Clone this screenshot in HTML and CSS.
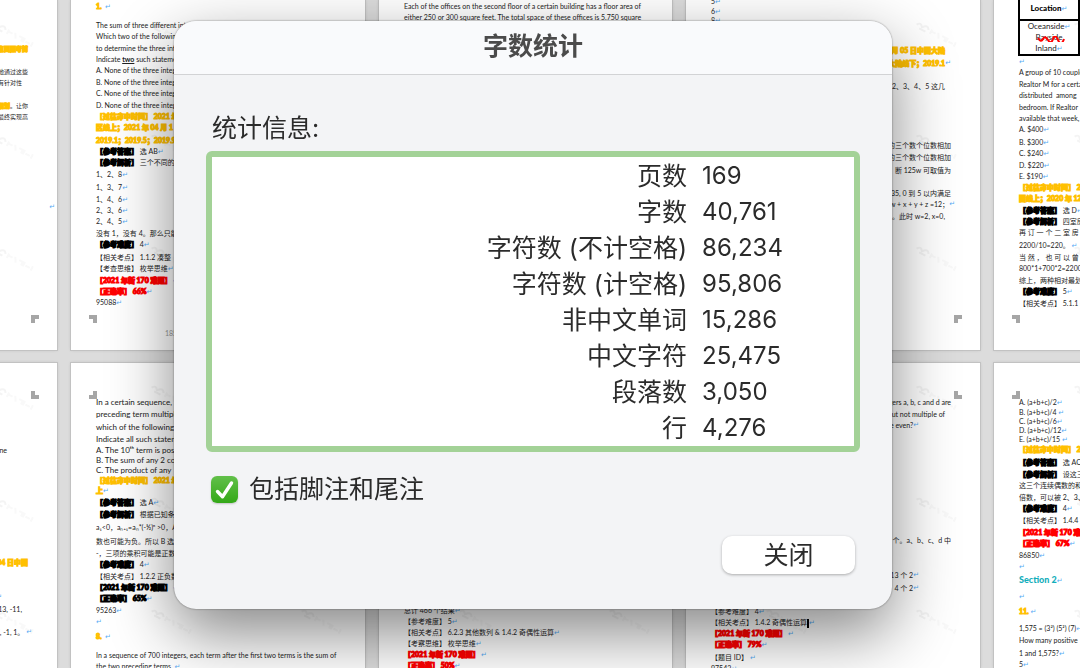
FILE: index.html
```html
<!DOCTYPE html>
<html lang="zh-CN">
<head>
<meta charset="utf-8">
<title>字数统计</title>
<link rel="stylesheet" href="styles.css">
</head>
<body>
<svg class="defs" aria-hidden="true">
  <defs>
    <pattern id="wm" width="150" height="112" patternUnits="userSpaceOnUse">
      <g id="tag" transform="translate(82 22) rotate(28)" fill="none" stroke="#f4f4f4" stroke-width="2">
        <path d="M0 3q3-5 6 0q4-6 7-1M4 5h7"/>
        <path d="M16 0v5M16 2h5M23 0l3 5M28 1h4v4M34 0v5M36 3h5M43 0v5" stroke="#f9f9f9"/>
      </g>
      <use href="#tag" x="-60" y="92"/>
    </pattern>
  </defs>
</svg>

<main class="workspace">
  <section class="page upper">
    <svg class="watermark"><rect width="100%" height="100%" fill="url(#wm)"/></svg>
    <p class="end m42 gold small">重点回顾考前</p>
    <p class="end m12 small">地通过这些</p>
    <p class="end2 small">有针对性</p>
    <p class="end m12 small"><b class="gold">规划</b>。让你</p>
    <p class="end small">最终实现高</p>
    <p class="edge ret m80"></p>
    <span class="mark br"></span>
  </section>

  <section class="page upper">
    <svg class="watermark"><rect width="100%" height="100%" fill="url(#wm)"/></svg>
    <p class="gold ret">1.&nbsp; </p>
    <p class="m8">The sum of three different integers</p>
    <p>Which two of the following statements</p>
    <p class="m1">to determine the three integers</p>
    <p>Indicate <b><u>two</u></b> such statements.</p>
    <p>A. None of the three integers</p>
    <p class="m1">B. None of the three integers</p>
    <p>C. None of the three integers</p>
    <p class="m1">D. None of the three integers</p>
    <p class="gold">【过往命中时间】 2021 年</p>
    <p class="gold">区线上；2021 年 04 月 1</p>
    <p class="gold m2">2019.1；2019.5；2019.9</p>
    <p class="ret"><b class="ink">【参考答案】</b> 选 AB</p>
    <p><b class="ink">【参考解析】</b> 三个不同的</p>
    <p class="ret m1">1、2、8</p>
    <p class="ret m2">1、3、7</p>
    <p class="ret m1">1、4、6</p>
    <p class="ret">2、3、6</p>
    <p class="ret">2、4、5</p>
    <p class="m1">没有 1，没有 4。那么只能</p>
    <p class="ret"><b class="ink">【参考难度】</b> 4</p>
    <p class="m2">【相关考点】 1.1.2 凑整</p>
    <p class="ret">【考查思维】 枚举思维</p>
    <p class="red ret m1">【2021 年新 170 难题】 </p>
    <p class="red ret">【正确率】 66%</p>
    <p class="ret">95088</p>
    <p class="folio m20">185</p>
    <span class="mark bl"></span>
  </section>

  <section class="page upper">
    <svg class="watermark"><rect width="100%" height="100%" fill="url(#wm)"/></svg>
    <p>Each of the offices on the second floor of a certain building has a floor area of</p>
    <p>either 250 or 300 square feet. The total space of these offices is 5.750 square</p>
  </section>

  <section class="page upper">
    <svg class="watermark"><rect width="100%" height="100%" fill="url(#wm)"/></svg>
    <p class="ret cut">5</p>
    <p class="ret tight">6</p>
    <p class="ret tight">8</p>
    <p class="end2 gold m20">2021 年 05 月 05 日中国大陆</p>
    <p class="end gold ret m2">大陆线下；2019.1</p>
    <p class="end2 m12">2、3、4、5 这几</p>
    <p class="end m48">的三个数个位数相加</p>
    <p class="end m1">的三个数个位数相加</p>
    <p class="end m2">断 125w 可取值为</p>
    <p class="end m12">35, 0 到 5 以内满足</p>
    <p class="far ret">w + x + y + z =12；</p>
    <p class="end2 m1">。此时 w=2, x=0,</p>
    <span class="mark br"></span>
  </section>

  <section class="page upper">
    <svg class="watermark"><rect width="100%" height="100%" fill="url(#wm)"/></svg>
    <table class="sheet">
      <tr><th class="ret">Location</th><th></th></tr>
      <tr><td><p class="ret">Oceanside</p><p class="misspelt">Bayside<svg viewBox="0 0 28 6" aria-hidden="true"><path d="M1 2q3 5 5 1t5 1t5-1t5 1t6-1" fill="none" stroke="#f00" stroke-width="2"/></svg></p><p class="ret">Inland</p></td><td></td></tr>
    </table>
    <p class="ret"></p>
    <p>A group of 10 couples</p>
    <p class="m1">Realtor M for a certain</p>
    <p>distributed  among</p>
    <p class="m1">bedroom. If Realtor</p>
    <p>available that week,</p>
    <p class="ret">A. $400</p>
    <p class="ret m2">B. $300</p>
    <p class="ret">C. $240</p>
    <p class="ret m1">D. $220</p>
    <p class="ret">E. $190</p>
    <p class="gold">【过往命中时间】 2021</p>
    <p class="gold">国线上；2020 年 12</p>
    <p class="ret m1"><b class="ink">【参考答案】</b> 选 D</p>
    <p><b class="ink">【参考解析】</b> 四室房</p>
    <p>再 订 一 个 二 室 房</p>
    <p class="ret m2">2200/10=220。 </p>
    <p class="m1">当 然 ， 也 可 以 曾</p>
    <p>800*1+700*2=2200</p>
    <p class="m1">综上，两种相对最划算</p>
    <p class="ret"><b class="ink">【参考难度】</b> 5</p>
    <p class="m1">【相关考点】 5.1.1 基</p>
    <span class="mark bl"></span>
  </section>

  <section class="page lower">
    <svg class="watermark"><rect width="100%" height="100%" fill="url(#wm)"/></svg>
    <p class="out2 m48">ne</p>
    <p class="end gold m101">04 日中国</p>
    <p class="out ret m24"></p>
    <p class="end2 m1">13, -11,</p>
    <p class="far ret m12">7, -1, 1。 </p>
    <span class="mark tr"></span>
  </section>

  <section class="page lower">
    <svg class="watermark"><rect width="100%" height="100%" fill="url(#wm)"/></svg>
    <p class="wide">In a certain sequence,</p>
    <p class="wide m1">preceding term multiplied</p>
    <p class="wide m2">which of the following</p>
    <p class="wide m1">Indicate all such statements</p>
    <p class="wide">A. The 10ᵗʰ term is positive</p>
    <p class="wide tight">B. The sum of any 2 consecutive</p>
    <p class="wide">C. The product of any</p>
    <p class="gold tight">【过往命中时间】 2021 年</p>
    <p class="gold ret">上</p>
    <p class="ret m1"><b class="ink">【参考答案】</b> 选 A</p>
    <p class="m1"><b class="ink">【参考解析】</b> 根据已知条件</p>
    <p class="m2">a₁&lt;0，aₙ₊₁=aₙ*(-<b>½</b>)ⁿ &gt;0，A</p>
    <p class="m3">数也可能为负。所以 B 选项</p>
    <p class="m1">-，三项的乘积可能是正数</p>
    <p class="ret"><b class="ink">【参考难度】</b> 4</p>
    <p class="m1">【相关考点】 1.2.2 正负数</p>
    <p class="ret"><b class="ink">【2021 年新 170 难题】</b> </p>
    <p class="ret"><b class="ink">【正确率】 65%</b></p>
    <p class="ret m1">95263</p>
    <p class="ret"></p>
    <p class="gold ret m4">8.&nbsp; </p>
    <p class="m8">In a sequence of 700 integers, each term after the first two terms is the sum of</p>
    <p class="ret">the two preceding terms. </p>
    <span class="mark tl"></span>
  </section>

  <section class="page lower">
    <svg class="watermark"><rect width="100%" height="100%" fill="url(#wm)"/></svg>
    <p class="ret m208">总计 466 个结果</p>
    <p class="ret">【参考难度】 5</p>
    <p class="ret">【相关考点】 6.2.3 其他数列 &amp; 1.4.2 奇偶性运算</p>
    <p class="ret">【考察思维】 枚举思维</p>
    <p class="red ret">【2021 年新 170 难题】 </p>
    <p class="red ret">【正确率】 50%</p>
  </section>

  <section class="page lower">
    <svg class="watermark"><rect width="100%" height="100%" fill="url(#wm)"/></svg>
    <p class="end">integers a, b, c and d are</p>
    <p class="end2 m1">but not multiple of</p>
    <p class="end3 ret">e even?</p>
    <p class="end m104">个。a、b、c、d 中</p>
    <p class="end3 ret m24">有 13 个 2</p>
    <p class="end3 ret m2">4 个 2</p>
    <p class="ret m12">【参考难度】 4</p>
    <p class="ret">【相关考点】 1.4.2 奇偶性运算<span class="caret"></span></p>
    <p class="red ret">【2021 年新 170 难题】 </p>
    <p class="red ret">【正确率】 79%</p>
    <p class="ret m2">【题目 ID】 </p>
    <p class="ret">97543</p>
    <span class="mark tr"></span>
  </section>

  <section class="page lower">
    <svg class="watermark"><rect width="100%" height="100%" fill="url(#wm)"/></svg>
    <p class="ret">A. (a+b+c)/2</p>
    <p class="ret tight">B. (a+b+c)/4 </p>
    <p class="ret tight">C. (a+b+c)/6</p>
    <p class="ret tight">D. (a+b+c)/12</p>
    <p class="ret tight">E. (a+b+c)/15 </p>
    <p class="gold">【过往命中时间】 2021</p>
    <p class="m2"><b class="ink">【参考答案】</b> 选 AC</p>
    <p class="m1"><b class="ink">【参考解析】</b> 设这三个</p>
    <p>这三个连续偶数的和</p>
    <p class="m1">倍数，可以被 2、3、</p>
    <p class="ret"><b class="ink">【参考难度】</b> 4</p>
    <p class="m1">【相关考点】 1.4.4 整</p>
    <p class="red m1">【2021 年新 170 难题】</p>
    <p class="red ret">【正确率】 67%</p>
    <p class="ret m1">86850</p>
    <p class="ret"></p>
    <p class="section ret m2">Section 2</p>
    <p class="ret m6"></p>
    <p class="gold ret m4">11. </p>
    <p class="ret m6">1,575 = (3²) (5²) (7)</p>
    <p class="m1">How many positive</p>
    <p class="ret m2">1 and 1,575?</p>
    <p class="ret">5</p>
    <span class="mark tl"></span>
  </section>
</main>

<div class="overlay">
  <form class="dialog" role="dialog" aria-labelledby="title">
    <header class="titlebar"><h1 id="title">字数统计</h1></header>
    <div class="content">
      <h2 id="caption">统计信息:</h2>
      <div class="frame">
        <table class="stats" aria-labelledby="caption">
          <tr><th scope="row">页数</th><td>169</td></tr>
          <tr><th scope="row">字数</th><td>40,761</td></tr>
          <tr><th scope="row">字符数 (不计空格)</th><td>86,234</td></tr>
          <tr><th scope="row">字符数 (计空格)</th><td>95,806</td></tr>
          <tr><th scope="row">非中文单词</th><td>15,286</td></tr>
          <tr><th scope="row">中文字符</th><td>25,475</td></tr>
          <tr><th scope="row">段落数</th><td>3,050</td></tr>
          <tr><th scope="row">行</th><td>4,276</td></tr>
        </table>
      </div>
      <label class="option" for="notes">
        <span class="box">
          <input type="checkbox" id="notes" checked>
          <svg viewBox="0 0 27 27" aria-hidden="true"><path d="M6.500 15.500l5 5.200L20.500 7" fill="none" stroke="#fff" stroke-width="3.400" stroke-linecap="round" stroke-linejoin="round"/></svg>
        </span>
        包括脚注和尾注
      </label>
      <div class="actions"><button type="button">关闭</button></div>
    </div>
  </form>
</div>
</body>
</html>
```
FILE: styles.css
```css
* { box-sizing: border-box; }

body {
  margin: 0;
  height: 100vh;
  overflow: hidden;
  background: #dcdcdc;
  color: #2b2b2b;
  font-family: Inter, "Noto Sans CJK SC", sans-serif;
}

.defs { position: absolute; width: 0; height: 0; }

/* Document pages behind the dialog */
.workspace {
  display: grid;
  grid-template-columns: 294px 294px 293px 294px 294px;
  grid-template-rows: 350px 1fr;
  gap: 13px 14px;
  height: 100vh;
  margin-left: -237px;
  overflow: hidden;
}

.page {
  position: relative;
  overflow: hidden;
  padding: 0 25px;
  background: #fff;
  box-shadow: 0 0 0 1px #c2c2c2, 0 0 3px #b4b4b4;
  font: 7px/11px Lato, "Noto Sans CJK SC", sans-serif;
  color: #222;
}
.upper { padding-top: 1px; }
.lower { padding-top: 34px; }

.page p {
  position: relative;
  margin: 0;
  height: 11px;
  white-space: pre;
}
.page .ret::after {
  content: "↵";
  color: #55abf5;
  font: 7px/11px "DejaVu Sans", sans-serif;
  -webkit-text-stroke: 0;
}

.watermark { position: absolute; top: 0; left: 0; width: 100%; height: 100%; }

.page .tight { height: 9px; line-height: 9px; }
.page .cut { margin-top: -5px; }
.page .m1 { margin-top: 1px; }
.page .m2 { margin-top: 2px; }
.page .m3 { margin-top: 3px; }
.page .m4 { margin-top: 4px; }
.page .m6 { margin-top: 6px; }
.page .m8 { margin-top: 8px; }
.page .m12 { margin-top: 12px; }
.page .m20 { margin-top: 20px; }
.page .m24 { margin-top: 24px; }
.page .m42 { margin-top: 42px; }
.page .m48 { margin-top: 48px; }
.page .m80 { margin-top: 80px; }
.page .m101 { margin-top: 101px; }
.page .m104 { margin-top: 104px; }
.page .m208 { margin-top: 208px; }

.page .end, .page .end2, .page .end3,
.page .far, .page .edge, .page .out, .page .out2 {
  display: flex;
  justify-content: flex-end;
}
.page .end { padding-right: 4px; }
.page .end2 { padding-right: 10px; }
.page .end3 { padding-right: 36px; }
.page .out { padding-right: 30px; }
.page .out2 { padding-right: 25px; }
.page .edge { margin-right: -23px; }
.page .small { font-size: 6px; }
.page .wide { font-size: 8px; }

.gold { color: #ffc000; font-weight: 900; -webkit-text-stroke: 1px #ffc000; }
.red { color: #f00; font-weight: 900; -webkit-text-stroke: 1px #f00; }
.ink { color: #000; font-weight: 900; -webkit-text-stroke: 1px #000; }
.page .section { color: #13aebb; font-size: 9px; font-weight: 900; }
.folio { padding-left: 69px; color: #999; }

.caret {
  display: inline-block;
  width: 2px;
  height: 9px;
  background: #000;
  vertical-align: middle;
}

.mark {
  position: absolute;
  width: 8px;
  height: 8px;
  border: 0 solid #a6a6a6;
}
.bl { left: 18px; bottom: 27px; border-width: 4px 4px 0 0; }
.br { right: 18px; bottom: 27px; border-width: 4px 0 0 4px; }
.tl { left: 18px; top: 28px; border-width: 0 4px 4px 0; }
.tr { right: 18px; top: 28px; border-width: 0 0 4px 4px; }

.sheet {
  position: relative;
  width: 122px;
  margin: -5px 0 0 -1px;
  border-collapse: collapse;
  table-layout: fixed;
  text-align: center;
}
.sheet th, .sheet td { padding: 0; border: 2px solid #000; }
.sheet th { height: 23px; color: #000; font-size: 8px; font-weight: 900; }
.sheet p { font-size: 8px; }
.misspelt svg { position: absolute; left: 17px; top: 4px; width: 28px; height: 6px; }

/* Dialog */
.overlay {
  position: fixed;
  inset: 0;
  display: flex;
  align-items: center;
  justify-content: center;
  padding: 0 14px 38px 0;
}

.dialog {
  width: 718px;
  max-width: 90vw;
  overflow: hidden;
  border-radius: 22px;
  background: #f3f4f6;
  box-shadow: 0 0 2px rgba(0, 0, 0, .5), 0 24px 64px rgba(0, 0, 0, .48);
}

.titlebar {
  height: 54px;
  border-bottom: 1px solid #d2d3d5;
  background: #f9fafc;
  text-align: center;
}
.titlebar h1 {
  margin: 0;
  font-size: 25px;
  line-height: 50px;
  font-weight: 600;
  color: #4b4b4b;
}

.content { padding: 34px 32px 35px; }
.content h2 {
  margin: 0 0 4px 6px;
  font-size: 25px;
  line-height: 38px;
  font-weight: 400;
}

.frame {
  padding-top: 1px;
  border: 6px solid #a3d297;
  border-radius: 6px;
  background: #fff;
}
.stats {
  width: 100%;
  border-collapse: collapse;
  table-layout: fixed;
  font-size: 25px;
  line-height: 36px;
}
.stats th {
  width: 74%;
  padding: 0;
  text-align: right;
  font-weight: 400;
}
.stats td { padding: 0 0 0 15px; font-size: 24px; }

.option {
  display: flex;
  align-items: center;
  gap: 11px;
  margin: 18px 5px 0;
  font-size: 25px;
  line-height: 38px;
}
.box { position: relative; display: flex; width: 27px; height: 27px; }
.box input {
  appearance: none;
  width: 100%;
  height: 100%;
  margin: 0;
  border-radius: 6px;
  background: linear-gradient(#62c04a, #34a818);
  box-shadow: 0 1px 2px rgba(0, 0, 0, .2);
}
.box svg { position: absolute; inset: 0; pointer-events: none; }

.actions {
  display: flex;
  justify-content: flex-end;
  margin: 28px 5px 0;
}
.actions button {
  width: 133px;
  padding: 0;
  border: 0;
  border-radius: 10px;
  background: #fff;
  box-shadow: 0 1px 3px rgba(0, 0, 0, .3);
  color: #2b2b2b;
  font: 25px/38px Inter, "Noto Sans CJK SC", sans-serif;
}
```
